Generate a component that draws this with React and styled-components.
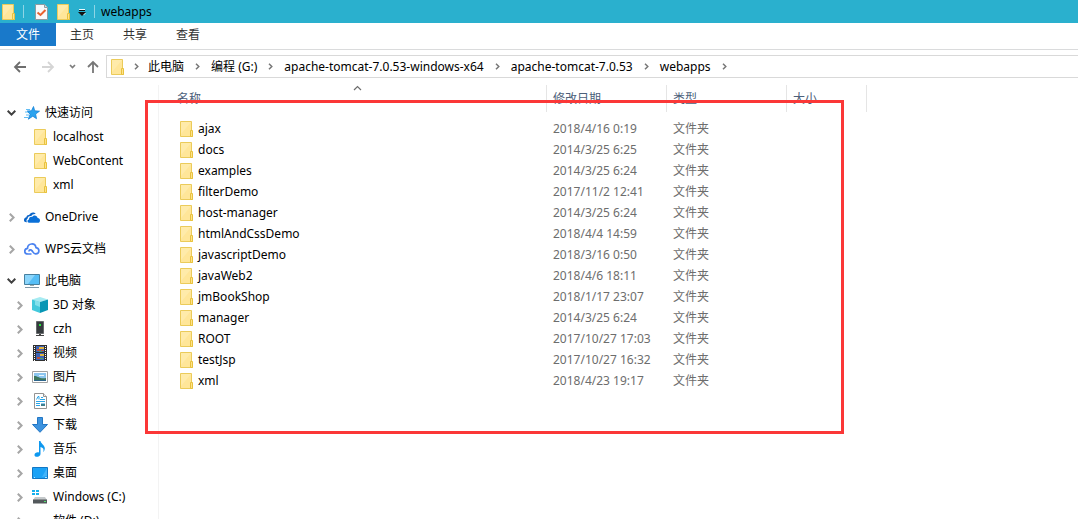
import React from "react";
import styled, { createGlobalStyle, css } from "styled-components";

const GlobalStyle = createGlobalStyle`
  *, *::before, *::after { box-sizing: border-box; }
  body {
    margin: 0;
    background: #fff;
    color: #000;
    font: 12px/20px "Noto Sans", "Noto Sans CJK SC", sans-serif;
  }
  button {
    margin: 0;
    padding: 0;
    border: 0;
    background: none;
    color: inherit;
    font: inherit;
    cursor: default;
  }
  svg { display: block; flex: none; }
`;

const Shell = styled.div`
  display: flex;
  flex-direction: column;
  height: 100vh;
  overflow: hidden;
`;

const TitleBar = styled.header`
  display: flex;
  align-items: center;
  height: 23px;
  padding-left: 2px;
  background: #2ab0ce;
  flex: none;
`;

const QuickTools = styled.div`
  display: flex;
  align-items: center;
  gap: 8px;
`;

const Separator = styled.span`
  width: 1px;
  height: 13px;
  background: #8ed5e5;
`;

const ToolGroup = styled.div`
  display: flex;
  align-items: center;
  gap: 9px;
  padding-left: 3px;
`;

const Title = styled.h1`
  margin: 0 0 0 6px;
  font-size: 12px;
  font-weight: 400;
`;

const Ribbon = styled.nav`
  display: flex;
  height: 27px;
  padding-bottom: 3px;
  border-bottom: 1px solid #dadbdc;
  flex: none;
`;

const RibbonTab = styled.button`
  height: 23px;
  margin-right: 1px;
  padding: 1px 14px 0;
  color: #333;
  ${(p) =>
    p.$primary &&
    css`
      margin-right: 0;
      padding: 1px 16px 0;
      background: #1979ca;
      color: #fff;
    `}
`;

const AddressRow = styled.div`
  display: flex;
  align-items: center;
  padding: 5px 0 7px 13px;
  flex: none;
`;

const History = styled.div`
  display: flex;
  align-items: center;
  gap: 14px;
  margin-right: 7px;
`;

const HistoryPair = styled.div`
  display: flex;
  align-items: center;
  gap: 11px;
`;

const AddressBar = styled.nav`
  display: flex;
  flex: 1;
  align-items: center;
  height: 23px;
  padding-left: 4px;
  border: 1px solid #d9d9d9;
  border-right: 0;
`;

const Crumbs = styled.ol`
  display: flex;
  align-items: center;
  margin: 0;
  padding: 0;
  list-style: none;
`;

const Crumb = styled.li`
  display: flex;
  align-items: center;
  white-space: nowrap;
`;

const CrumbArrow = styled.button`
  display: flex;
  justify-content: center;
  width: ${(p) => (p.$lead ? 24 : 27)}px;
`;

const Body = styled.div`
  display: flex;
  flex: 1;
  min-height: 0;
`;

const Sidebar = styled.nav`
  flex: none;
  width: 159px;
  padding-top: 16px;
  border-right: 1px solid #f3f3f3;
  overflow: hidden;
`;

const Branch = styled.ul`
  margin: 0 0 8px;
  padding: 0;
  list-style: none;
`;

const TreeItem = styled.button`
  display: flex;
  align-items: center;
  gap: 5px;
  width: 100%;
  height: 24px;
  padding-left: ${(p) => (p.$nested ? 15 : 7)}px;
  white-space: nowrap;
`;

const Toggle = styled.span`
  display: flex;
  justify-content: center;
  width: 9px;
  margin-right: 3px;
`;

const TreeIcon = styled.span`
  display: flex;
  justify-content: center;
  width: 16px;
`;

const FileArea = styled.main`
  position: relative;
  flex: 1;
  min-width: 0;
`;

const Files = styled.table`
  width: 708px;
  border-collapse: separate;
  border-spacing: 0;
  table-layout: fixed;
`;

const Column = styled.col`
  width: ${(p) => p.$width}px;
`;

const HeadCell = styled.th`
  position: relative;
  height: 27px;
  padding: 0 0 0 ${(p) => (p.$first ? 18 : 6)}px;
  border-right: 1px solid #e5e5e5;
  color: #4c607a;
  font-weight: 400;
  text-align: left;
`;

const SortMark = styled.span`
  position: absolute;
  top: 0;
  left: 50%;
`;

const FileRows = styled.tbody`
  &::before {
    content: "";
    display: block;
    height: 6px;
  }
`;

const Cell = styled.td`
  height: 21px;
  padding: 0 0 0 6px;
  color: #6d6d6d;
  line-height: 21px;
  white-space: nowrap;
`;

const NameCell = styled(Cell)`
  padding-left: 21px;
  color: #000;
`;

const FileName = styled.span`
  display: flex;
  align-items: center;
  gap: 5px;
`;

const Highlight = styled.div`
  position: absolute;
  top: 15px;
  left: -14px;
  width: 699px;
  height: 334px;
  border: 3px solid #fb3737;
  pointer-events: none;
`;

const FolderIcon = () => (
  <svg width="13" height="16" viewBox="0 0 13 16">
    <path d="M.5.5h11v10h1v5H.5z" fill="#ffe699" stroke="#ebcb5a" />
    <path d="M1 1h10L1 13z" fill="#ffeeb5" opacity=".6" />
    <path d="M10.5 15.5v-6h2v6z" fill="#ffe28a" stroke="#e8c23e" />
  </svg>
);

const CheckedPageIcon = () => (
  <svg width="13" height="16" viewBox="0 0 13 16">
    <path d="M.5.5h9l3 3v12H.5z" fill="#f7f9fb" stroke="#8f9ba0" />
    <path d="M9.500.5v3h3" fill="#ddd" stroke="#8f9ba0" />
    <path d="m2.500 8.500 3 2.500L10.500 6" fill="none" stroke="#e8622f" strokeWidth="2" />
  </svg>
);

const MenuCaret = () => (
  <svg width="8" height="9" viewBox="0 0 8 9">
    <path d="M1 2h6v1H1zM4 8h2L8 6H6z" fill="#eaf8fb" />
    <path d="M1 3h6v1H1zM0 5h8L4 9z" fill="#111" />
  </svg>
);

const HistoryArrow = ({ color, flip, up }) => (
  <svg width={up ? 12 : 14} height={up ? 14 : 12} viewBox={up ? "0 0 12 14" : "0 0 14 12"}>
    <path
      d={up ? "M6 13V2M1 7l5-5 5 5" : flip ? "M1 6h11M7 1l5 5-5 5" : "M13 6H2M7 1 2 6l5 5"}
      fill="none"
      stroke={color}
      strokeWidth="1.800"
    />
  </svg>
);

const SmallDown = () => (
  <svg width="7" height="5" viewBox="0 0 7 5">
    <path d="m1 1 2.500 2.500L6 1" fill="none" stroke="#7d7d7d" strokeWidth="1.700" />
  </svg>
);

const CrumbChevron = () => (
  <svg width="5" height="7" viewBox="0 0 5 7">
    <path d="m1 .7 2.800 2.800L1 6.300" fill="none" stroke="#777" strokeWidth="1.500" />
  </svg>
);

const TreeChevron = ({ open }) =>
  open ? (
    <svg width="9" height="6" viewBox="0 0 9 6">
      <path d="m.7.8 3.800 3.800L8.300.8" fill="none" stroke="#404040" strokeWidth="2" />
    </svg>
  ) : (
    <svg width="6" height="9" viewBox="0 0 6 9">
      <path d="m.8.7 3.800 3.800L.8 8.300" fill="none" stroke="#a6a6a6" strokeWidth="2" />
    </svg>
  );

const SortChevron = () => (
  <svg width="9" height="6" viewBox="0 0 9 6">
    <path d="m1 5 3.500-3.500L8 5" fill="none" stroke="#6d6d6d" strokeWidth="1.200" />
  </svg>
);

const StarIcon = () => (
  <svg width="16" height="16" viewBox="0 0 16 16">
    <path d="m9.500 1.500 1.200 4.300 4.800.4-3.900 2.800.9 4.700-3.700-2.500-4.500 3 1.800-5L3 6l4.500-.2z" fill="#2ba3ef" stroke="#1683d8" strokeWidth=".8" />
    <path d="M2 4.500h4M1 7h3M2 10h3M0 12.500h4" stroke="#62bdf4" />
  </svg>
);

const OneDriveIcon = () => (
  <svg width="16" height="11" viewBox="0 0 16 11">
    <path d="M0 8.500C-.2 6.500 1 5.500 2.400 5.300 2.500 3.500 4 2.700 5.200 3 6.300.6 9.800-.5 11.700 2 9.500 1.700 8 2.700 7.300 4 4.900 3.700 3.500 5.200 3.600 6.800 2.400 7.300 2.200 9 3 10.200 1.300 10.400.1 9.700 0 8.500z" fill="#0a64c8" />
    <path d="M5 10.800C3.100 10.500 3 7.800 5 7.500 4.800 5.500 6.600 4.500 8 5c1.300-2.500 5.300-2 5.600 1 1.600.1 2.400 1.100 2.400 2.400 0 1.300-.9 2.400-2.200 2.400z" fill="#0a70d8" />
  </svg>
);

const WpsCloudIcon = () => (
  <svg width="16" height="12" viewBox="0 0 16 12">
    <path d="M7.500 11H4C-.3 11-.2 5.800 3.500 5.300 3.700-.2 11.200-.5 12 4.600c3.800.6 4 6.100-.4 6.300-2 .1-2.400-1.700-3.700-3.300C6.800 6.300 4.900 6.800 5 8.500" fill="none" stroke="#4a82f0" strokeWidth="1.700" />
  </svg>
);

const ComputerIcon = () => (
  <svg width="16" height="15" viewBox="0 0 16 15">
    <path d="M.5.500h15v10H.5z" fill="#56bef6" stroke="#47809f" />
    <path d="M1 1h10L4 10H1z" fill="#8bd5fb" />
    <path d="M6 11h4v1H6z" fill="#9aa" />
    <path d="M1 13.500h14" stroke="#7f98a8" />
  </svg>
);

const CubeIcon = () => (
  <svg width="16" height="16" viewBox="0 0 16 16">
    <path d="m8 0 8 2.500L8 5 0 2.500z" fill="#a6ebf2" />
    <path d="M0 2.500 8 5v11l-8-3z" fill="#43c9dc" />
    <path d="M16 2.500 8 5v11l8-3z" fill="#0796b5" />
    <path d="m3 3.500 5 1.500v5L3 8z" fill="#82e0eb" />
  </svg>
);

const TowerIcon = () => (
  <svg width="10" height="16" viewBox="0 0 10 16">
    <path d="M1.500.5h7v12h-7z" fill="#363b3e" stroke="#66696b" />
    <path d="M4 3h2v2H4z" fill="#27e33c" />
    <path d="M4 13h2v1h3v1H1v-1h3z" fill="#454545" />
  </svg>
);

const FilmIcon = () => (
  <svg width="14" height="16" viewBox="0 0 14 16">
    <path d="M0 0h14v16H0z" fill="#303030" />
    <path d="M1.500 1v15M12.500 1v15" stroke="#fff" strokeDasharray="1 1" />
    <path d="M3 1h8v6H3zM3 8h8v7H3z" fill="#3d64b9" />
    <path d="M6 2h5v2H6zM7 9h4v2H7z" fill="#e3b43f" />
    <path d="M4 4h3v2H4zM8 5h3v1H8zM4 12h3v2H4z" fill="#ba513c" />
    <path d="M6 6h3v1H6zM7 13h3v1H7z" fill="#55a657" />
  </svg>
);

const PictureIcon = () => (
  <svg width="16" height="12" viewBox="0 0 16 12">
    <path d="M.5.500h15v11H.5z" fill="#fff" stroke="#a2a2a2" />
    <path d="M2 2h12v8H2z" fill="#8cc5ee" />
    <path d="M7 4h5v1H7z" fill="#e8f5fd" />
    <path d="M2 5c3-.5 5 3 12 2v3H2z" fill="#3d765d" />
    <path d="M2 9h12v1H2z" fill="#2d658c" />
  </svg>
);

const DocumentIcon = () => (
  <svg width="13" height="16" viewBox="0 0 13 16">
    <path d="M.5.500h9l3 3v12H.5z" fill="#fff" stroke="#939393" />
    <path d="M9.500.500v3h3" fill="#eee" stroke="#939393" />
    <path d="M2.500 6.500 4 3.500h1v3M7 4.500h2M6 6.500h5M2 8.500h9M2 10.500h4M2 12.500h4" fill="none" stroke="#2ba5e8" />
    <path d="M7 10h4v1H7z" fill="#8cc9ee" />
    <path d="M7 11h4v2H7z" fill="#3d7f8f" />
  </svg>
);

const DownloadIcon = () => (
  <svg width="16" height="16" viewBox="0 0 16 16">
    <path d="M5.500.500h5v7h5L8 15.300.5 7.500h5z" fill="#3d93df" stroke="#2276c4" />
  </svg>
);

const MusicIcon = () => (
  <svg width="12" height="16" viewBox="0 0 12 16">
    <path d="M5 0h1.500c.2 3 5.700 4.500 4 9-.2 1-1 1.700-1.500 2 1.500-3-.3-4.500-2.500-5v7c0 3-5.500 4-6 1.300C.3 12 3 10.800 5 11.500z" fill="#0e98ef" />
  </svg>
);

const DesktopIcon = () => (
  <svg width="16" height="12" viewBox="0 0 16 12">
    <path d="M.5.500h15v11H.5z" fill="#1ba2f6" stroke="#1277c4" />
    <path d="M2 10.500h1M13 10.500h2" stroke="#b8e4ff" />
    <path d="M15 1v8l-5 1z" fill="#43b4fa" />
  </svg>
);

const DriveBody = () => (
  <>
    <path d="M3 7h10l2 3H1z" fill="#c5c9cb" />
    <path d="M1 9.500h14v4H1z" fill="#52585b" />
    <path d="M12 11h2v1h-2z" fill="#52e36c" />
  </>
);

const SystemDriveIcon = () => (
  <svg width="16" height="14" viewBox="0 0 16 14">
    <path d="M0 0h3v2H0zM4 0h3v2H4zM0 3h3v2H0zM4 3h3v2H4z" fill="#16b0ed" />
    <DriveBody />
  </svg>
);

const DriveIcon = () => (
  <svg width="16" height="14" viewBox="0 0 16 14">
    <DriveBody />
  </svg>
);

const tree = [
  {
    label: "快速访问", Icon: StarIcon, open: true,
    children: [
      { label: "localhost", Icon: FolderIcon, leaf: true },
      { label: "WebContent", Icon: FolderIcon, leaf: true },
      { label: "xml", Icon: FolderIcon, leaf: true },
    ],
  },
  { label: "OneDrive", Icon: OneDriveIcon },
  { label: "WPS云文档", Icon: WpsCloudIcon },
  {
    label: "此电脑", Icon: ComputerIcon, open: true,
    children: [
      { label: "3D 对象", Icon: CubeIcon },
      { label: "czh", Icon: TowerIcon },
      { label: "视频", Icon: FilmIcon },
      { label: "图片", Icon: PictureIcon },
      { label: "文档", Icon: DocumentIcon },
      { label: "下载", Icon: DownloadIcon },
      { label: "音乐", Icon: MusicIcon },
      { label: "桌面", Icon: DesktopIcon },
      { label: "Windows (C:)", Icon: SystemDriveIcon },
      { label: "软件 (D:)", Icon: DriveIcon },
    ],
  },
];

const crumbs = ["此电脑", "编程 (G:)", "apache-tomcat-7.0.53-windows-x64", "apache-tomcat-7.0.53", "webapps"];

const files = [
  ["ajax", "2018/4/16 0:19"],
  ["docs", "2014/3/25 6:25"],
  ["examples", "2014/3/25 6:24"],
  ["filterDemo", "2017/11/2 12:41"],
  ["host-manager", "2014/3/25 6:24"],
  ["htmlAndCssDemo", "2018/4/4 14:59"],
  ["javascriptDemo", "2018/3/16 0:50"],
  ["javaWeb2", "2018/4/6 18:11"],
  ["jmBookShop", "2018/1/17 23:07"],
  ["manager", "2014/3/25 6:24"],
  ["ROOT", "2017/10/27 17:03"],
  ["testJsp", "2017/10/27 16:32"],
  ["xml", "2018/4/23 19:17"],
];

const TreeNode = ({ node, nested }) => (
  <li>
    <TreeItem $nested={nested} aria-expanded={node.leaf ? undefined : !!node.open}>
      <Toggle>{!node.leaf && <TreeChevron open={node.open} />}</Toggle>
      <TreeIcon><node.Icon /></TreeIcon>
      {node.label}
    </TreeItem>
  </li>
);

export default function App() {
  return (
    <Shell lang="zh-CN">
      <GlobalStyle />
      <TitleBar>
        <QuickTools>
          <FolderIcon />
          <Separator />
          <ToolGroup>
            <button aria-label="属性"><CheckedPageIcon /></button>
            <button aria-label="新建文件夹"><FolderIcon /></button>
          </ToolGroup>
          <button aria-label="自定义快速访问工具栏"><MenuCaret /></button>
          <Separator />
        </QuickTools>
        <Title>webapps</Title>
      </TitleBar>

      <Ribbon>
        <RibbonTab $primary>文件</RibbonTab>
        <RibbonTab>主页</RibbonTab>
        <RibbonTab>共享</RibbonTab>
        <RibbonTab>查看</RibbonTab>
      </Ribbon>

      <AddressRow>
        <History>
          <button aria-label="后退"><HistoryArrow color="#6e6e6e" /></button>
          <button aria-label="前进"><HistoryArrow color="#d5d5d5" flip /></button>
          <HistoryPair>
            <button aria-label="最近浏览的位置"><SmallDown /></button>
            <button aria-label="上移"><HistoryArrow color="#777" up /></button>
          </HistoryPair>
        </History>
        <AddressBar>
          <FolderIcon />
          <CrumbArrow $lead aria-label="展开"><CrumbChevron /></CrumbArrow>
          <Crumbs>
            {crumbs.map((name) => (
              <Crumb key={name}>
                <button>{name}</button>
                <CrumbArrow aria-label="展开"><CrumbChevron /></CrumbArrow>
              </Crumb>
            ))}
          </Crumbs>
        </AddressBar>
      </AddressRow>

      <Body>
        <Sidebar>
          {tree.map((root) => (
            <Branch key={root.label}>
              <TreeNode node={root} />
              {root.children?.map((child) => (
                <TreeNode key={child.label} node={child} nested />
              ))}
            </Branch>
          ))}
        </Sidebar>
        <FileArea>
          <Files>
            <colgroup>
              <Column $width={388} />
              <Column $width={120} />
              <Column $width={120} />
              <Column $width={80} />
            </colgroup>
            <thead>
              <tr>
                <HeadCell $first aria-sort="ascending">
                  名称
                  <SortMark><SortChevron /></SortMark>
                </HeadCell>
                <HeadCell>修改日期</HeadCell>
                <HeadCell>类型</HeadCell>
                <HeadCell>大小</HeadCell>
              </tr>
            </thead>
            <FileRows>
              {files.map(([name, date]) => (
                <tr key={name}>
                  <NameCell><FileName><FolderIcon />{name}</FileName></NameCell>
                  <Cell>{date}</Cell>
                  <Cell>文件夹</Cell>
                  <Cell />
                </tr>
              ))}
            </FileRows>
          </Files>
          <Highlight />
        </FileArea>
      </Body>
    </Shell>
  );
}
